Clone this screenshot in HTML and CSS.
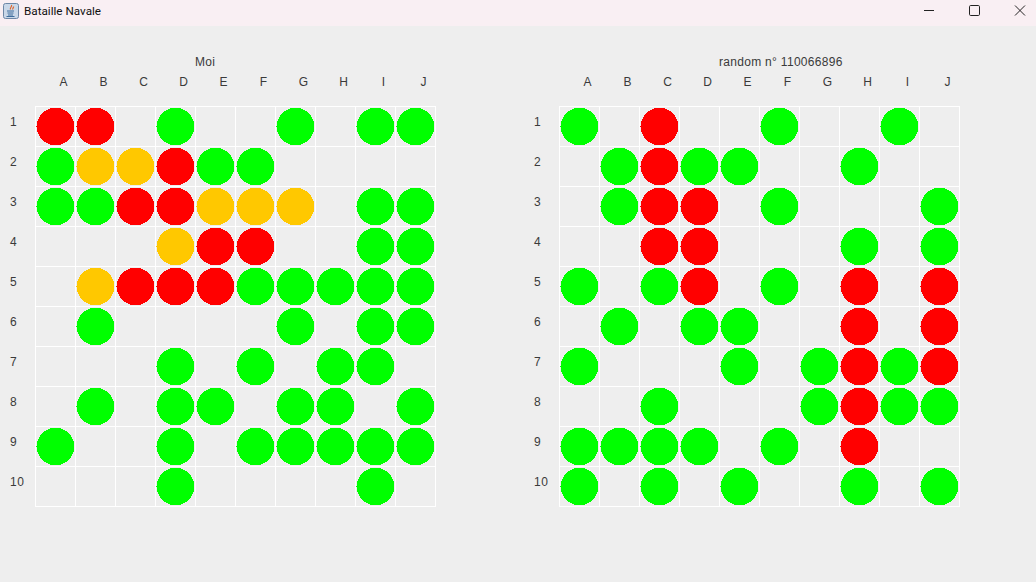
FILE: index.html
```html
<!DOCTYPE html>
<html lang="en">
<head>
    <meta charset="UTF-8">
    <title>Bataille Navale</title>
    <link rel="stylesheet" href="styles.css">
</head>
<body>
    <div class="titlebar">
        <svg class="app-icon" width="16" height="16" viewBox="0 0 16 16">
            <rect x="0.5" y="0.5" width="15" height="15" rx="2" fill="#c9d7e8" stroke="#6d87a6"/>
            <path d="M8.5 2c1 1.500-2 2.500-1 4.500M10.500 3.500c.5 1-1.500 2-.5 3" fill="none" stroke="#e0632a" stroke-width="1.200"/>
            <path d="M4 8h7M4.500 10h6M5 12h5M3.500 13.500h8" fill="none" stroke="#3f6d9c"/>
        </svg>
        <span class="app-title">Bataille Navale</span>
        <div class="win-buttons">
            <svg width="12" height="12" viewBox="0 0 12 12"><path d="M0 5.500h10" stroke="#222" fill="none"/></svg>
            <svg width="12" height="12" viewBox="0 0 12 12"><rect x="0.500" y="0.500" width="10" height="10" rx="1.200" stroke="#222" fill="none"/></svg>
            <svg width="12" height="12" viewBox="0 0 12 12"><path d="M1 0.500l10 10M11 0.500l-10 10" stroke="#222" fill="none"/></svg>
        </div>
    </div>

    <div class="boards">
        <div class="board">
            <div class="board-title">Moi</div>
            <div class="col-labels"><span>A</span><span>B</span><span>C</span><span>D</span><span>E</span><span>F</span><span>G</span><span>H</span><span>I</span><span>J</span></div>
            <div class="board-body">
                <div class="row-labels"><span>1</span><span>2</span><span>3</span><span>4</span><span>5</span><span>6</span><span>7</span><span>8</span><span>9</span><span>10</span></div>
                <div class="grid">
                    <div class="cell red"></div><div class="cell red"></div><div class="cell"></div><div class="cell green"></div><div class="cell"></div><div class="cell"></div><div class="cell green"></div><div class="cell"></div><div class="cell green"></div><div class="cell green"></div>
                    <div class="cell green"></div><div class="cell orange"></div><div class="cell orange"></div><div class="cell red"></div><div class="cell green"></div><div class="cell green"></div><div class="cell"></div><div class="cell"></div><div class="cell"></div><div class="cell"></div>
                    <div class="cell green"></div><div class="cell green"></div><div class="cell red"></div><div class="cell red"></div><div class="cell orange"></div><div class="cell orange"></div><div class="cell orange"></div><div class="cell"></div><div class="cell green"></div><div class="cell green"></div>
                    <div class="cell"></div><div class="cell"></div><div class="cell"></div><div class="cell orange"></div><div class="cell red"></div><div class="cell red"></div><div class="cell"></div><div class="cell"></div><div class="cell green"></div><div class="cell green"></div>
                    <div class="cell"></div><div class="cell orange"></div><div class="cell red"></div><div class="cell red"></div><div class="cell red"></div><div class="cell green"></div><div class="cell green"></div><div class="cell green"></div><div class="cell green"></div><div class="cell green"></div>
                    <div class="cell"></div><div class="cell green"></div><div class="cell"></div><div class="cell"></div><div class="cell"></div><div class="cell"></div><div class="cell green"></div><div class="cell"></div><div class="cell green"></div><div class="cell green"></div>
                    <div class="cell"></div><div class="cell"></div><div class="cell"></div><div class="cell green"></div><div class="cell"></div><div class="cell green"></div><div class="cell"></div><div class="cell green"></div><div class="cell green"></div><div class="cell"></div>
                    <div class="cell"></div><div class="cell green"></div><div class="cell"></div><div class="cell green"></div><div class="cell green"></div><div class="cell"></div><div class="cell green"></div><div class="cell green"></div><div class="cell"></div><div class="cell green"></div>
                    <div class="cell green"></div><div class="cell"></div><div class="cell"></div><div class="cell green"></div><div class="cell"></div><div class="cell green"></div><div class="cell green"></div><div class="cell green"></div><div class="cell green"></div><div class="cell green"></div>
                    <div class="cell"></div><div class="cell"></div><div class="cell"></div><div class="cell green"></div><div class="cell"></div><div class="cell"></div><div class="cell"></div><div class="cell"></div><div class="cell green"></div><div class="cell"></div>
                </div>
            </div>
        </div>

        <div class="board">
            <div class="board-title">random n° 110066896</div>
            <div class="col-labels"><span>A</span><span>B</span><span>C</span><span>D</span><span>E</span><span>F</span><span>G</span><span>H</span><span>I</span><span>J</span></div>
            <div class="board-body">
                <div class="row-labels"><span>1</span><span>2</span><span>3</span><span>4</span><span>5</span><span>6</span><span>7</span><span>8</span><span>9</span><span>10</span></div>
                <div class="grid">
                    <div class="cell green"></div><div class="cell"></div><div class="cell red"></div><div class="cell"></div><div class="cell"></div><div class="cell green"></div><div class="cell"></div><div class="cell"></div><div class="cell green"></div><div class="cell"></div>
                    <div class="cell"></div><div class="cell green"></div><div class="cell red"></div><div class="cell green"></div><div class="cell green"></div><div class="cell"></div><div class="cell"></div><div class="cell green"></div><div class="cell"></div><div class="cell"></div>
                    <div class="cell"></div><div class="cell green"></div><div class="cell red"></div><div class="cell red"></div><div class="cell"></div><div class="cell green"></div><div class="cell"></div><div class="cell"></div><div class="cell"></div><div class="cell green"></div>
                    <div class="cell"></div><div class="cell"></div><div class="cell red"></div><div class="cell red"></div><div class="cell"></div><div class="cell"></div><div class="cell"></div><div class="cell green"></div><div class="cell"></div><div class="cell green"></div>
                    <div class="cell green"></div><div class="cell"></div><div class="cell green"></div><div class="cell red"></div><div class="cell"></div><div class="cell green"></div><div class="cell"></div><div class="cell red"></div><div class="cell"></div><div class="cell red"></div>
                    <div class="cell"></div><div class="cell green"></div><div class="cell"></div><div class="cell green"></div><div class="cell green"></div><div class="cell"></div><div class="cell"></div><div class="cell red"></div><div class="cell"></div><div class="cell red"></div>
                    <div class="cell green"></div><div class="cell"></div><div class="cell"></div><div class="cell"></div><div class="cell green"></div><div class="cell"></div><div class="cell green"></div><div class="cell red"></div><div class="cell green"></div><div class="cell red"></div>
                    <div class="cell"></div><div class="cell"></div><div class="cell green"></div><div class="cell"></div><div class="cell"></div><div class="cell"></div><div class="cell green"></div><div class="cell red"></div><div class="cell green"></div><div class="cell green"></div>
                    <div class="cell green"></div><div class="cell green"></div><div class="cell green"></div><div class="cell green"></div><div class="cell"></div><div class="cell green"></div><div class="cell"></div><div class="cell red"></div><div class="cell"></div><div class="cell"></div>
                    <div class="cell green"></div><div class="cell"></div><div class="cell green"></div><div class="cell"></div><div class="cell green"></div><div class="cell"></div><div class="cell"></div><div class="cell green"></div><div class="cell"></div><div class="cell green"></div>
                </div>
            </div>
        </div>
    </div>
</body>
</html>
```

FILE: styles.css
```css
body {
    margin: 0;
    height: 582px;
    overflow: hidden;
    background-color: #eeeeee;
    color: #3a3a3a;
    font-family: "Liberation Sans", Arial, sans-serif;
    font-size: 12px;
}

.titlebar {
    display: flex;
    align-items: center;
    height: 26px;
    padding-left: 3px;
    padding-bottom: 4px;
    box-sizing: border-box;
    background-color: #f9eff3;
    color: #111111;
}

.app-title {
    margin-left: 5px;
    font-family: Roboto, sans-serif;
    font-size: 11.7px;
}

.win-buttons {
    display: flex;
    gap: 33px;
    margin-left: auto;
    padding-right: 10px;
}

.boards {
    display: flex;
    gap: 98px;
    padding: 29px 0 0 10px;
}

.board {
    flex: none;
    width: 426px;
}

.board-title {
    height: 14px;
    line-height: 14px;
    padding-left: 185px;
    letter-spacing: 0.3px;
}

.col-labels {
    display: flex;
    padding-left: 33.5px;
    margin-top: 5px;
    height: 32px;
}

.col-labels span {
    flex: none;
    width: 40px;
    line-height: 16px;
    text-align: center;
}

.board-body {
    display: flex;
}

.row-labels {
    display: flex;
    flex-direction: column;
    width: 25px;
    letter-spacing: 0.5px;
}

.row-labels span {
    height: 40px;
    line-height: 32px;
}

.grid {
    display: grid;
    grid-template-columns: repeat(10, 39px);
    grid-auto-rows: 39px;
    gap: 1px;
    padding: 1px;
    background-color: #ffffff;
}

.cell {
    background-color: #eeeeee;
    background-repeat: no-repeat;
}

/* hard stops so the ovals stay jagged like the original, plus the 1px tick on the left */
.cell.green {
    background-image: linear-gradient(#00ff00, #00ff00), radial-gradient(circle at 19.5px 19.5px, #00ff00 18.7px, transparent 18.7px);
    background-size: 2px 1px, 100% 100%;
    background-position: 0 19px, 0 0;
}

.cell.red {
    background-image: linear-gradient(#ff0000, #ff0000), radial-gradient(circle at 19.5px 19.5px, #ff0000 18.7px, transparent 18.7px);
    background-size: 2px 1px, 100% 100%;
    background-position: 0 19px, 0 0;
}

.cell.orange {
    background-image: linear-gradient(#ffc800, #ffc800), radial-gradient(circle at 19.5px 19.5px, #ffc800 18.7px, transparent 18.7px);
    background-size: 2px 1px, 100% 100%;
    background-position: 0 19px, 0 0;
}
```
